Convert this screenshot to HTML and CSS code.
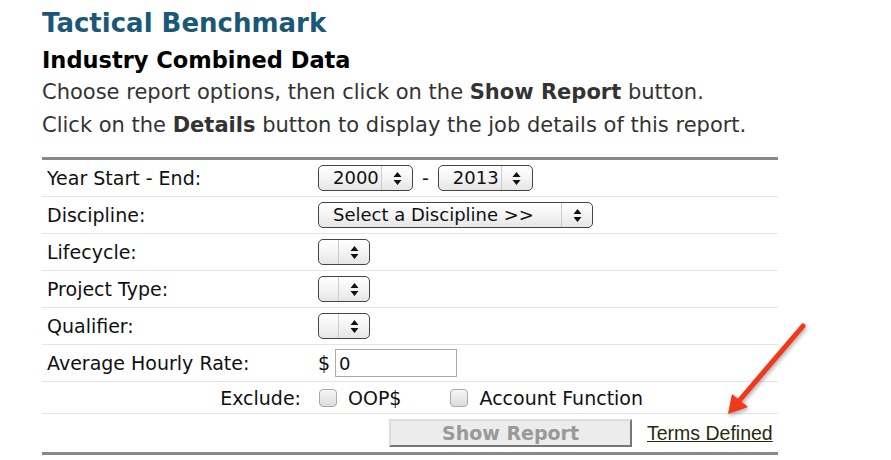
FILE: index.html
```html
<!DOCTYPE html>
<html lang="en">
<head>
<meta charset="utf-8"/>
<link rel="stylesheet" href="styles.css">
</head>
<body>
<div id="base">
    <h1>Tactical Benchmark</h1>
    <h2>Industry Combined Data</h2>
    <p class="intro">Choose report options, then click on the <b>Show Report</b> button.</p>
    <p class="intro">Click on the <b>Details</b> button to display the job details of this report.</p>

    <div id="form">
        <div class="row">
            <div class="lbl">Year Start - End:</div>
            <div class="ctl">
                <div class="sel year"><span class="val">2000</span><span class="btn"><svg width="9" height="13" viewBox="0 0 9 13"><path d="M4.5 0L8.5 5H0.5Z M4.5 13L8.5 8H0.5Z" fill="#111"/></svg></span></div>
                <span class="dash">-</span>
                <div class="sel year"><span class="val">2013</span><span class="btn"><svg width="9" height="13" viewBox="0 0 9 13"><path d="M4.5 0L8.5 5H0.5Z M4.5 13L8.5 8H0.5Z" fill="#111"/></svg></span></div>
            </div>
        </div>
        <div class="row">
            <div class="lbl">Discipline:</div>
            <div class="ctl">
                <div class="sel disc"><span class="val">Select a Discipline &gt;&gt;</span><span class="btn"><svg width="9" height="13" viewBox="0 0 9 13"><path d="M4.5 0L8.5 5H0.5Z M4.5 13L8.5 8H0.5Z" fill="#111"/></svg></span></div>
            </div>
        </div>
        <div class="row">
            <div class="lbl">Lifecycle:</div>
            <div class="ctl">
                <div class="sel empty"><span class="val"></span><span class="btn"><svg width="9" height="13" viewBox="0 0 9 13"><path d="M4.5 0L8.5 5H0.5Z M4.5 13L8.5 8H0.5Z" fill="#111"/></svg></span></div>
            </div>
        </div>
        <div class="row">
            <div class="lbl">Project Type:</div>
            <div class="ctl">
                <div class="sel empty"><span class="val"></span><span class="btn"><svg width="9" height="13" viewBox="0 0 9 13"><path d="M4.5 0L8.5 5H0.5Z M4.5 13L8.5 8H0.5Z" fill="#111"/></svg></span></div>
            </div>
        </div>
        <div class="row">
            <div class="lbl">Qualifier:</div>
            <div class="ctl">
                <div class="sel empty"><span class="val"></span><span class="btn"><svg width="9" height="13" viewBox="0 0 9 13"><path d="M4.5 0L8.5 5H0.5Z M4.5 13L8.5 8H0.5Z" fill="#111"/></svg></span></div>
            </div>
        </div>
        <div class="row">
            <div class="lbl">Average Hourly Rate:</div>
            <div class="ctl">
                <span class="dollar">$</span><input class="rate" type="text" value="0">
            </div>
        </div>
        <div class="row exclude">
            <div class="lbl">Exclude:</div>
            <div class="ctl">
                <span class="chk"></span><span class="chklbl">OOP$</span>
                <span class="chk second"></span><span class="chklbl">Account Function</span>
            </div>
        </div>
        <div class="row last">
            <div class="actions">
                <button class="show">Show Report</button>
                <a href="#" class="terms">Terms Defined</a>
            </div>
        </div>
    </div>

    <svg class="arrow" width="891" height="460" viewBox="0 0 891 460">
        <line x1="803" y1="326" x2="739" y2="401" stroke="#f2371b" stroke-width="5" stroke-linecap="round"/>
        <polygon points="728,414 732,394 748,407" fill="#f2371b"/>
    </svg>
</div>
</body>
</html>
```

FILE: styles.css
```css
html {
    font-family: "DejaVu Sans", Verdana, sans-serif;
    padding:0;
    margin:0;
}
body {
    padding:0;
    margin:0;
    background:#fff;
}
#base {
    position:relative;
    width:891px;
    height:460px;
    padding:0 0 0 42px;
    box-sizing:border-box;
    overflow:hidden;
}
h1 {
    margin:0;
    padding-top:8px;
    height:36px;
    font-size:26px;
    line-height:30px;
    color:#1a5877;
}
h2 {
    margin:0;
    height:33px;
    font-size:22.5px;
    line-height:33px;
    color:#000;
}
.intro {
    margin:0;
    height:33px;
    font-size:21px;
    line-height:30px;
    color:#333;
}
#form {
    margin-top:14px;
    width:736px;
    border-top:3px solid #888;
    border-bottom:3px solid #888;
    color:#111;
    font-size:19px;
}
.row {
    display:grid;
    grid-template-columns:276px 1fr;
    align-items:center;
    height:36px;
    border-bottom:1px solid #e4e4e4;
}
.row.exclude {
    height:31px;
}
.row.last {
    display:flex;
    height:38px;
    border-bottom:none;
}
.lbl {
    padding-left:5px;
}
.exclude .lbl {
    text-align:right;
    padding-right:17px;
}
.ctl {
    display:flex;
    align-items:center;
}
.sel {
    display:flex;
    align-items:stretch;
    height:24px;
    border:1px solid #444;
    border-radius:5px;
    background:linear-gradient(#fff, #f4f4f4 50%, #e6e6e6);
    box-sizing:content-box;
    font-size:18px;
}
.sel .val {
    flex:1;
    line-height:24px;
    padding-left:14px;
}
.sel .btn {
    width:30px;
    display:flex;
    align-items:center;
    justify-content:center;
    border-left:1px solid #ccc;
}
.sel.year {
    width:93px;
}
.sel.disc {
    width:273px;
}
.sel.empty {
    width:50px;
}
.dash {
    margin:0 9px 0 9px;
}
.dollar {
    margin-right:5px;
}
.rate {
    width:122px;
    height:28px;
    box-sizing:border-box;
    border:1px solid #aaa;
    padding:0 3px;
    font-family:inherit;
    font-size:18px;
    color:#111;
    margin:0;
}
.chk {
    display:inline-block;
    width:16px;
    height:16px;
    border:1px solid #aaa;
    border-radius:4px;
    background:linear-gradient(#f6f6f6, #dcdcdc);
    margin:0 11px 0 1px;
}
.chk.second {
    margin-left:49px;
}
.actions {
    display:flex;
    align-items:center;
    margin-left:347px;
}
.show {
    width:243px;
    height:28px;
    border:2px solid;
    border-color:#ddd #777 #777 #ddd;
    background:#ececec;
    color:#999;
    font-family:inherit;
    font-weight:bold;
    font-size:19px;
    padding:0;
}
.terms {
    margin-left:15px;
    color:#2a2810;
    font-family:"Liberation Sans", Arial, sans-serif;
    font-size:19.5px;
}
.arrow {
    position:absolute;
    left:0;
    top:0;
    filter:drop-shadow(1px 2px 2px rgba(0,0,0,0.35));
    pointer-events:none;
}
```
